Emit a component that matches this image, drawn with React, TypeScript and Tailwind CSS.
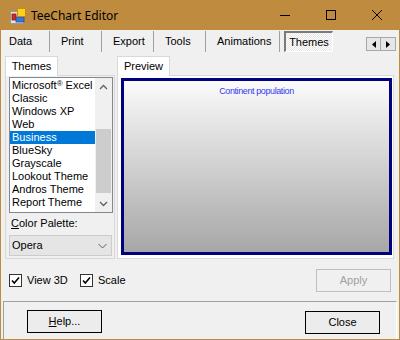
import React from "react";

const themes = [
  "Microsoft",
  "Classic",
  "Windows XP",
  "Web",
  "Business",
  "BlueSky",
  "Grayscale",
  "Lookout Theme",
  "Andros Theme",
  "Report Theme",
];

function AppIcon() {
  return (
    <svg width="16" height="16" viewBox="0 0 16 16">
      <rect x="0.5" y="3.5" width="13" height="12" fill="#e4e4e4" stroke="#9a9a9a" />
      <rect x="2" y="6" width="4" height="6" fill="#d42a1e" stroke="#8a1a12" strokeWidth="0.8" />
      <rect x="6" y="9" width="8" height="5" fill="#3a78d8" stroke="#1f4f9e" strokeWidth="0.8" />
      <rect x="7.5" y="0.5" width="8" height="8" fill="#f8d21c" stroke="#d08a10" />
    </svg>
  );
}

function CheckBox({ label, className }: { label: string; className?: string }) {
  return (
    <div className={`flex items-center ${className ?? ""}`}>
      <div className="w-[13px] h-[13px] border border-[#333333] bg-white flex items-center justify-center">
        <svg width="11" height="11" viewBox="0 0 11 11">
          <path d="M2 5.5 L4.3 8 L9 2.5" fill="none" stroke="#000" strokeWidth="1.6" />
        </svg>
      </div>
      <span className="ml-[5px]">{label}</span>
    </div>
  );
}

function Chevron({ up }: { up?: boolean }) {
  return (
    <svg width="9" height="6" viewBox="0 0 9 6">
      <path
        d={up ? "M1 5 L4.5 1.5 L8 5" : "M1 1 L4.5 4.5 L8 1"}
        fill="none"
        stroke="#606060"
        strokeWidth="1.3"
      />
    </svg>
  );
}

export default function App() {
  return (
    <div className="w-[400px] h-[340px] flex flex-col bg-[#f0f0f0] border-x border-b border-[#be8b3f] font-['Liberation_Sans',Arial,sans-serif] text-[11px] leading-[13px] text-black select-none">
      {/* title bar */}
      <div className="h-[30px] -mx-px bg-[#be8b3f] flex items-center">
        <div className="ml-[10px] mt-[1px]">
          <AppIcon />
        </div>
        <span className="ml-[5px] font-['Noto_Sans',sans-serif] text-[12px] text-black">TeeChart Editor</span>
        <div className="ml-auto flex h-full">
          <div className="w-[46px] flex items-center justify-center">
            <svg width="10" height="10" viewBox="0 0 10 10">
              <path d="M0 5.5 H10" stroke="#000" strokeWidth="1" />
            </svg>
          </div>
          <div className="w-[46px] flex items-center justify-center">
            <svg width="10" height="10" viewBox="0 0 10 10">
              <rect x="0.5" y="0.5" width="9" height="9" fill="none" stroke="#000" />
            </svg>
          </div>
          <div className="w-[46px] flex items-center justify-center">
            <svg width="10" height="10" viewBox="0 0 10 10">
              <path d="M0 0 L10 10 M10 0 L0 10" stroke="#000" strokeWidth="1" />
            </svg>
          </div>
        </div>
      </div>

      {/* main tabs */}
      <div className="mt-[1px] h-[21px] flex items-stretch">
        <div className="w-[48px] pl-[8px] flex items-center">Data</div>
        <div className="w-px bg-[#a0a0a0]" />
        <div className="w-[51px] pl-[11px] flex items-center">Print</div>
        <div className="w-px bg-[#a0a0a0]" />
        <div className="w-[51px] pl-[11px] flex items-center">Export</div>
        <div className="w-px bg-[#a0a0a0]" />
        <div className="w-[51px] pl-[11px] flex items-center">Tools</div>
        <div className="w-px bg-[#a0a0a0]" />
        <div className="w-[73px] pl-[11px] flex items-center">Animations</div>
        <div className="w-px bg-[#a0a0a0]" />
        <div className="ml-[4px] w-[49px] flex items-center justify-center border-t-2 border-l-2 border-[#7a7a7a] border-r border-b border-r-white border-b-white bg-[repeating-conic-gradient(#ffffff_0%_25%,#e6e6e6_0%_50%)] bg-[length:2px_2px]">
          Themes
        </div>
        <div className="ml-auto mr-[3px] mb-[1px] self-end flex">
          <div className="w-[15px] h-[14px] border border-[#a8a8a8] bg-[#e6e6e6] flex items-center justify-center">
            <svg width="4" height="7" viewBox="0 0 4 7">
              <path d="M4 0 L0 3.5 L4 7 Z" fill="#000" />
            </svg>
          </div>
          <div className="w-[15px] h-[14px] border border-l-0 border-[#a8a8a8] bg-[#e6e6e6] flex items-center justify-center">
            <svg width="4" height="7" viewBox="0 0 4 7">
              <path d="M0 0 L4 3.5 L0 7 Z" fill="#000" />
            </svg>
          </div>
        </div>
      </div>

      {/* body */}
      <div className="pl-[4px] pt-[4px] flex gap-[2px]">
        {/* left: themes list */}
        <div className="w-[110px] flex flex-col">
          <div className="relative z-10 -mb-px w-[53px] h-[20px] bg-white border border-b-0 border-[#d9d9d9] flex items-center justify-center">
            Themes
          </div>
          <div className="h-[184px] border border-[#d9d9d9] bg-[#f0f0f0] pl-[3px] pt-[1px] flex flex-col">
            <div className="w-[104px] h-[136px] border border-[#828790] bg-white flex">
              <div className="flex-1 pt-[1px] overflow-hidden">
                {themes.map((t) => (
                  <div
                    key={t}
                    className={`h-[13px] pl-[2px] whitespace-nowrap ${
                      t === "Business" ? "bg-[#0078d7] text-white" : ""
                    }`}
                  >
                    {t === "Microsoft" ? (
                      <>
                        Microsoft<span className="text-[8px] align-top leading-[9px]">®</span> Excel
                      </>
                    ) : (
                      t
                    )}
                  </div>
                ))}
              </div>
              <div className="w-[17px] bg-[#f0f0f0] flex flex-col">
                <div className="h-[17px] flex items-center justify-center">
                  <Chevron up />
                </div>
                <div className="flex-1 pt-[34px] pb-[2px] px-px">
                  <div className="h-[64px] bg-[#cdcdcd]" />
                </div>
                <div className="h-[17px] flex items-center justify-center">
                  <Chevron />
                </div>
              </div>
            </div>
            <div className="mt-[4px] pl-[2px]">
              <span className="underline">C</span>olor Palette:
            </div>
            <div className="mt-[5px] w-[103px] h-[21px] border border-[#cccccc] bg-[#e5e5e5] flex items-center pl-[2px] pr-[4px]">
              <span>Opera</span>
              <div className="ml-auto">
                <svg width="9" height="6" viewBox="0 0 9 6">
                  <path d="M0.5 1 L4.5 5 L8.5 1" fill="none" stroke="#606060" strokeWidth="1" />
                </svg>
              </div>
            </div>
          </div>
        </div>

        {/* right: preview */}
        <div className="w-[277px] flex flex-col">
          <div className="relative z-10 -mb-px w-[53px] h-[20px] bg-white border border-b-0 border-[#d9d9d9] flex items-center justify-center">
            Preview
          </div>
          <div className="h-[184px] border border-[#d9d9d9] bg-white pl-[3px] pt-[2px]">
            <div className="w-[271px] h-[177px] border-[3px] border-[#000080] bg-gradient-to-b from-[#fbfbfb] to-[#a7a7a7] flex justify-center">
              <span className="mt-[5px] font-['Liberation_Sans',Arial,sans-serif] text-[9px] leading-[10px] tracking-[-0.4px] text-[#3838f4]">
                Continent population
              </span>
            </div>
          </div>
        </div>
      </div>

      {/* options row */}
      <div className="mt-[10px] h-[23px] flex items-center">
        <CheckBox label="View 3D" className="ml-[8px] w-[71px]" />
        <CheckBox label="Scale" />
        <div className="ml-auto mr-[8px] w-[75px] h-[23px] border border-[#bfbfbf] bg-[#f0f0f0] text-[#a0a0a0] flex items-center justify-center">
          Apply
        </div>
      </div>

      {/* bottom panel */}
      <div className="mt-[9px] mx-[2px] flex-1 border-t border-l border-[#a0a0a0] border-r border-r-white flex items-start">
        <div className="mt-[8px] ml-[23px] w-[75px] h-[23px] border border-black bg-[#ececec] flex items-center justify-center">
          <span>
            <span className="underline">H</span>elp...
          </span>
        </div>
        <div className="mt-[9px] ml-auto mr-[16px] w-[75px] h-[23px] border border-black bg-[#ececec] flex items-center justify-center">
          Close
        </div>
      </div>
    </div>
  );
}
